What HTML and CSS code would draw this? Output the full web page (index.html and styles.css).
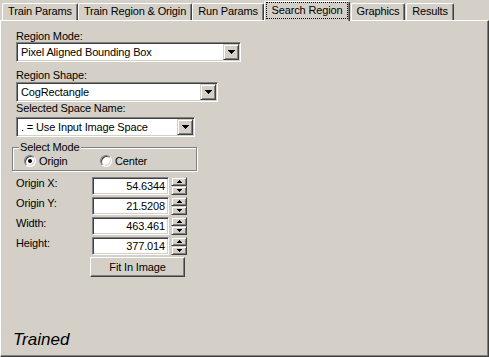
FILE: index.html
```html
<!DOCTYPE html>
<html lang="en">
  <head>
    <meta charset="UTF-8" />
    <meta name="viewport" content="width=device-width, initial-scale=1.0" />
    <title>Search Region</title>
    <link rel="stylesheet" href="styles.css">
  </head>
  <body>
    <section class="dialog">
      <nav class="tabs">
        <span class="tab tab-train">Train Params</span>
        <span class="tab tab-region">Train Region &amp; Origin</span>
        <span class="tab tab-run">Run Params</span>
        <span class="tab tab-search active"><span class="tab-focus">Search Region</span></span>
        <span class="tab tab-graphics">Graphics</span>
        <span class="tab tab-results">Results</span>
      </nav>

      <article class="panel">
        <label class="field-label first">Region Mode:</label>
        <div class="combo combo-mode">
          <span class="combo-text">Pixel Aligned Bounding Box</span>
          <span class="combo-btn">
            <svg width="7" height="4" viewBox="0 0 7 4" shape-rendering="crispEdges"><path d="M0 0h7v1h-7zM1 1h5v1h-5zM2 2h3v1h-3zM3 3h1v1h-1z" fill="#000"/></svg>
          </span>
        </div>

        <label class="field-label second">Region Shape:</label>
        <div class="combo combo-shape">
          <span class="combo-text">CogRectangle</span>
          <span class="combo-btn">
            <svg width="7" height="4" viewBox="0 0 7 4" shape-rendering="crispEdges"><path d="M0 0h7v1h-7zM1 1h5v1h-5zM2 2h3v1h-3zM3 3h1v1h-1z" fill="#000"/></svg>
          </span>
        </div>

        <label class="field-label third">Selected Space Name:</label>
        <div class="combo combo-space">
          <span class="combo-text">. = Use Input Image Space</span>
          <span class="combo-btn">
            <svg width="7" height="4" viewBox="0 0 7 4" shape-rendering="crispEdges"><path d="M0 0h7v1h-7zM1 1h5v1h-5zM2 2h3v1h-3zM3 3h1v1h-1z" fill="#000"/></svg>
          </span>
        </div>

        <div class="group">
          <span class="group-title">Select Mode</span>
          <div class="radios">
            <span class="radio-option"><span class="radio checked"></span>Origin</span>
            <span class="radio-option"><span class="radio"></span>Center</span>
          </div>
        </div>

        <div class="values">
          <span class="value-label">Origin X:</span>
          <span class="textbox">54.6344</span>
          <span class="spin">
            <span class="spin-btn"><svg width="5" height="3" viewBox="0 0 5 3" shape-rendering="crispEdges"><path d="M2 0h1v1h-1zM1 1h3v1h-3zM0 2h5v1h-5z" fill="#000"/></svg></span>
            <span class="spin-btn"><svg width="5" height="3" viewBox="0 0 5 3" shape-rendering="crispEdges"><path d="M0 0h5v1h-5zM1 1h3v1h-3zM2 2h1v1h-1z" fill="#000"/></svg></span>
          </span>

          <span class="value-label">Origin Y:</span>
          <span class="textbox">21.5208</span>
          <span class="spin">
            <span class="spin-btn"><svg width="5" height="3" viewBox="0 0 5 3" shape-rendering="crispEdges"><path d="M2 0h1v1h-1zM1 1h3v1h-3zM0 2h5v1h-5z" fill="#000"/></svg></span>
            <span class="spin-btn"><svg width="5" height="3" viewBox="0 0 5 3" shape-rendering="crispEdges"><path d="M0 0h5v1h-5zM1 1h3v1h-3zM2 2h1v1h-1z" fill="#000"/></svg></span>
          </span>

          <span class="value-label">Width:</span>
          <span class="textbox">463.461</span>
          <span class="spin">
            <span class="spin-btn"><svg width="5" height="3" viewBox="0 0 5 3" shape-rendering="crispEdges"><path d="M2 0h1v1h-1zM1 1h3v1h-3zM0 2h5v1h-5z" fill="#000"/></svg></span>
            <span class="spin-btn"><svg width="5" height="3" viewBox="0 0 5 3" shape-rendering="crispEdges"><path d="M0 0h5v1h-5zM1 1h3v1h-3zM2 2h1v1h-1z" fill="#000"/></svg></span>
          </span>

          <span class="value-label">Height:</span>
          <span class="textbox">377.014</span>
          <span class="spin">
            <span class="spin-btn"><svg width="5" height="3" viewBox="0 0 5 3" shape-rendering="crispEdges"><path d="M2 0h1v1h-1zM1 1h3v1h-3zM0 2h5v1h-5z" fill="#000"/></svg></span>
            <span class="spin-btn"><svg width="5" height="3" viewBox="0 0 5 3" shape-rendering="crispEdges"><path d="M0 0h5v1h-5zM1 1h3v1h-3zM2 2h1v1h-1z" fill="#000"/></svg></span>
          </span>

          <button class="push-btn">Fit In Image</button>
        </div>

        <p class="status">Trained</p>
      </article>
    </section>
  </body>
</html>
```

FILE: styles.css
```css
body {
  margin: 0;
  padding: 0;
  font-family: "Liberation Sans", Arial, sans-serif;
  font-size: 11px;
  letter-spacing: -0.15px;
  color: #000;
  background: #d4d0c8;
}

.dialog {
  width: 489px;
  height: 357px;
  display: flex;
  flex-direction: column;
  background: #d4d0c8;
  overflow: hidden;
}

/* tab strip */
.tabs {
  display: flex;
  align-items: flex-end;
  height: 20px;
  padding-left: 2px;
  flex: 0 0 auto;
}

.tab {
  box-sizing: border-box;
  height: 17px;
  line-height: 14px;
  text-align: center;
  white-space: nowrap;
  border-top: 1px solid #fff;
  border-left: 1px solid #fff;
  border-right: 1px solid #404040;
  border-radius: 2px 2px 0 0;
  box-shadow: inset -1px 0 0 #808080;
  background: #d4d0c8;
}

.tab-train { width: 76px; }
.tab-region { width: 114px; }
.tab-run { width: 72px; }
.tab-graphics { width: 54px; margin-left: 1px; }
.tab-results { width: 48px; margin-left: 1px; }

.tab.active {
  width: 86px;
  height: 20px;
  margin-bottom: -1px;
  padding: 0 1px 0 1px;
  position: relative;
  z-index: 1;
}

.tab-focus {
  display: block;
  height: 17px;
  box-sizing: border-box;
  line-height: 15px;
  border: 1px dotted #000;
}

/* page body */
.panel {
  flex: 1 1 auto;
  display: flex;
  flex-direction: column;
  align-items: flex-start;
  padding: 0 0 6px 11px;
  border-top: 1px solid #fff;
  border-left: 1px solid #fff;
  border-right: 1px solid #404040;
  border-bottom: 1px solid #404040;
  box-shadow: inset -1px -1px 0 #808080;
}

.field-label {
  display: block;
  line-height: 11px;
  margin-left: 4px;
}

.field-label.first { margin-top: 10px; }
.field-label.second { margin-top: 8px; }
.field-label.third { margin-top: 1px; }

.combo {
  box-sizing: border-box;
  display: flex;
  align-items: center;
  height: 20px;
  margin-left: 4px;
  padding: 2px;
  background: #fff;
  border: 1px solid;
  border-color: #808080 #fff #fff #808080;
  box-shadow: inset 1px 1px 0 #404040, inset -1px -1px 0 #d4d0c8;
}

.combo-mode { width: 225px; margin-top: 0; }
.combo-shape { width: 202px; margin-top: 1px; }
.combo-space { width: 179px; margin-top: 3px; }

.combo-text {
  flex: 1;
  line-height: 14px;
  padding-left: 2px;
  white-space: nowrap;
}

.combo-btn {
  box-sizing: border-box;
  width: 16px;
  height: 16px;
  margin: -1px -1px -1px 0;
  display: flex;
  align-items: center;
  justify-content: center;
  background: #d4d0c8;
  border: 1px solid;
  border-color: #d4d0c8 #404040 #404040 #d4d0c8;
  box-shadow: inset 1px 1px 0 #fff, inset -1px -1px 0 #808080;
}

.combo-btn svg {
  display: block;
}

/* radio group */
.group {
  position: relative;
  box-sizing: border-box;
  width: 185px;
  height: 24px;
  margin-top: 10px;
  padding: 7px 0 0 11px;
  border: 1px solid #808080;
  box-shadow: inset 1px 1px 0 #fff, 1px 1px 0 #fff;
}

.group-title {
  position: absolute;
  top: -6px;
  left: 6px;
  padding: 0 1px;
  line-height: 11px;
  background: #d4d0c8;
}

.radios {
  display: grid;
  grid-template-columns: 76px auto;
}

.radio-option {
  display: flex;
  align-items: center;
  gap: 3px;
  line-height: 12px;
}

.radio {
  position: relative;
  box-sizing: border-box;
  width: 12px;
  height: 12px;
  border-radius: 50%;
  background: #fff;
  border: 1px solid;
  border-color: #808080 #fff #fff #808080;
  box-shadow: inset 1px 1px 0 #404040, inset -1px -1px 0 #d4d0c8;
}

.radio.checked::after {
  content: "";
  position: absolute;
  left: 3px;
  top: 3px;
  width: 4px;
  height: 4px;
  border-radius: 50%;
  background: #000;
}

/* numeric fields */
.values {
  display: grid;
  grid-template-columns: 74px 77px 16px;
  grid-auto-rows: 18px;
  column-gap: 2px;
  row-gap: 2px;
  margin-top: 6px;
  margin-left: 4px;
}

.value-label {
  line-height: 11px;
  margin-top: 1px;
}

.textbox {
  box-sizing: border-box;
  height: 18px;
  padding: 0 3px 0 2px;
  line-height: 16px;
  text-align: right;
  background: #fff;
  border: 1px solid;
  border-color: #808080 #fff #fff #808080;
  box-shadow: inset 1px 1px 0 #404040, inset -1px -1px 0 #d4d0c8;
}

.spin {
  display: flex;
  flex-direction: column;
}

.spin-btn {
  box-sizing: border-box;
  height: 9px;
  display: flex;
  align-items: center;
  justify-content: center;
  background: #d4d0c8;
  border: 1px solid;
  border-color: #d4d0c8 #404040 #404040 #d4d0c8;
  box-shadow: inset 1px 1px 0 #fff, inset -1px -1px 0 #808080;
}

.spin-btn svg {
  display: block;
}

.push-btn {
  grid-column: 2 / 4;
  justify-self: start;
  box-sizing: border-box;
  width: 95px;
  height: 20px;
  margin: 0 0 0 -2px;
  padding: 0;
  font: inherit;
  letter-spacing: inherit;
  color: #000;
  background: #d4d0c8;
  border: 1px solid;
  border-color: #fff #404040 #404040 #fff;
  box-shadow: inset -1px -1px 0 #808080;
}

.status {
  margin: auto 0 0 1px;
  font-size: 17px;
  font-style: italic;
  letter-spacing: 0;
  line-height: 20px;
}
```
